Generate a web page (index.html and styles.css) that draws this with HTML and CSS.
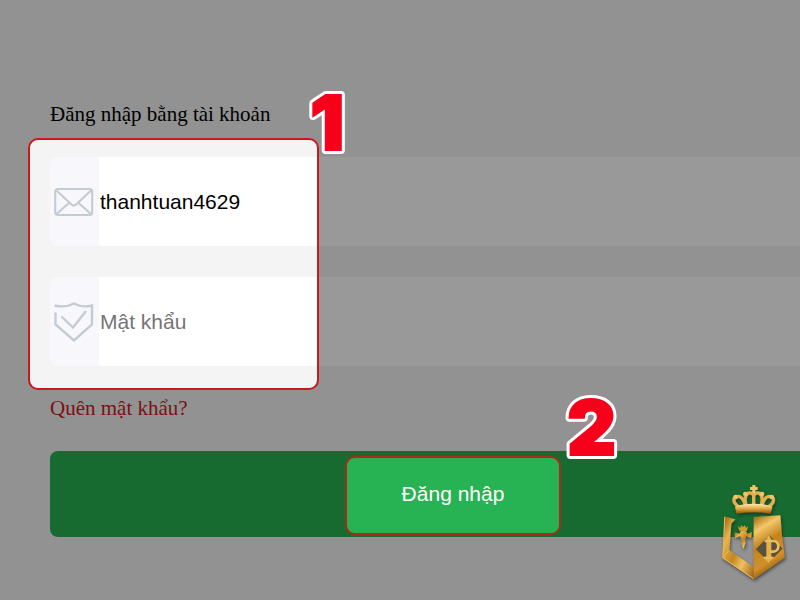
FILE: index.html
```
<!DOCTYPE html>
<html lang="vi">
<head>
  <meta charset="UTF-8">
  <meta name="viewport" content="width=device-width, initial-scale=1.0">
  <title>Đăng nhập</title>
  <link rel="stylesheet" href="styles.css">
</head>
<body>
  <form class="login">
    <h1 class="login-title">Đăng nhập bằng tài khoản</h1>

    <div class="field">
      <label class="field-icon" for="username" aria-label="Tài khoản">
        <svg width="40" height="30" viewBox="0 0 40 30" fill="none" stroke="#c3ccd3" stroke-width="2.200">
          <rect x="1.200" y="2" width="37" height="26" rx="2.500"/>
          <path d="M2.500 3.500L17.500 17.500q2.300 2 4.600 0L37 3.500M2.500 27l12.500-11M37 27L24.500 16"/>
        </svg>
      </label>
      <input class="field-input" id="username" type="text" value="thanhtuan4629">
    </div>

    <div class="field">
      <label class="field-icon" for="password" aria-label="Mật khẩu">
        <svg width="40" height="40" viewBox="0 0 40 40" fill="none" stroke="#c3ccd3" stroke-width="2.400">
          <path d="M.5 3.500q11 2.500 19.500-2 8 4.500 18 2V22.500L20 38.500 1.500 22.500V10.500"/>
          <path d="M7.500 14.500L19 25.500 32 9"/>
        </svg>
      </label>
      <input class="field-input" id="password" type="password" placeholder="Mật khẩu">
    </div>

    <a class="forgot" href="#">Quên mật khẩu?</a>
    <button class="submit" type="submit">Đăng nhập</button>
  </form>

  <!-- Dimmed layer with two highlighted steps -->
  <svg class="guide" width="100%" height="100%">
    <defs>
      <mask id="holes">
        <rect width="100%" height="100%" fill="#fff"/>
        <rect x="29" y="139" width="289" height="250" rx="9" fill="#000"/>
        <rect x="346" y="457" width="214" height="77" rx="9" fill="#000"/>
      </mask>
    </defs>
    <rect width="100%" height="100%" fill="#000" fill-opacity="0.4" mask="url(#holes)"/>
    <rect class="frame" x="29" y="139" width="289" height="250" rx="9"/>
    <rect class="frame frame-dark" x="346" y="457" width="214" height="77" rx="9"/>
    <text class="step step-outline" x="310" y="150">1</text>
    <text class="step" x="310" y="150">1</text>
    <text class="step step-outline" x="567" y="455">2</text>
    <text class="step" x="567" y="455">2</text>
  </svg>

  <!-- Gold crest -->
  <svg class="crest" width="90" height="115" viewBox="0 0 270 345">
    <defs>
      <linearGradient id="gold" x1="0" y1="0" x2="1" y2="1">
        <stop offset="0" stop-color="#8d5609"/>
        <stop offset="0.250" stop-color="#e8b44b"/>
        <stop offset="0.500" stop-color="#c38620"/>
        <stop offset="0.700" stop-color="#f0c060"/>
        <stop offset="1" stop-color="#965c0b"/>
      </linearGradient>
      <linearGradient id="gold-right" x1="0" y1="0" x2="0.300" y2="1">
        <stop offset="0" stop-color="#9a5f0c"/>
        <stop offset="0.250" stop-color="#f3c76a"/>
        <stop offset="0.500" stop-color="#c3821c"/>
        <stop offset="0.800" stop-color="#d0912b"/>
        <stop offset="1" stop-color="#8d5609"/>
      </linearGradient>
      <linearGradient id="gold-base" x1="0" y1="0" x2="0" y2="1">
        <stop offset="0" stop-color="#fff0b4"/>
        <stop offset="0.500" stop-color="#e0a840"/>
        <stop offset="1" stop-color="#8d5609"/>
      </linearGradient>
      <filter id="crest-shadow" x="-20%" y="-20%" width="140%" height="140%">
        <feDropShadow dx="3" dy="6" stdDeviation="4" flood-color="#222" flood-opacity="0.6"/>
      </filter>
    </defs>
    <g filter="url(#crest-shadow)">
      <!-- crown -->
      <g fill="none" stroke="#e3b04e" stroke-width="10">
        <path d="M89 97C66 84 67 64 84 64q16 0 24 33M173 97c23-13 22-33 5-33q-16 0-24 33"/>
        <path d="M109 96C96 44 128 50 131 62 134 50 166 44 153 96"/>
        <path d="M131 50v46"/>
      </g>
      <path d="M80 92q51-12 102 0l5 4-5 20q-51-8-102 0l-5-20z" fill="url(#gold-base)"/>
      <g fill="#f0c468">
        <path d="M127 30h9v6h7v9h-7v9h-9v-9h-7v-9h7z"/>
        <circle cx="106" cy="57" r="7"/>
        <circle cx="156" cy="57" r="7"/>
        <circle cx="77" cy="66" r="7"/>
        <circle cx="185" cy="66" r="7"/>
      </g>
      <!-- shield -->
      <path d="M42 124l34 9-12 13-6 80 73 50v36L37 249l5-60z" fill="url(#gold)"/>
      <path d="M44 126l-5 121 18-21M38 248l93 63" fill="none" stroke="#e8b85a" stroke-width="3"/>
      <path d="M131 126l80-5 5 60 8 67-93 64z" fill="url(#gold-right)"/>
      <path d="M178 181l39 39-39 41-40-38z" fill="#575140"/>
      <path d="M138 223l40 38 39-41" fill="none" stroke="#8d5609" stroke-width="3"/>
      <path d="M176 180l8 12v56l5 4-13 11-12-11 5-4v-56z" fill="#e7b04a"/>
      <path d="M164 198h26c20 0 20 32 0 32h-8" fill="none" stroke="#edbd62" stroke-width="8"/>
      <path d="M161 248h30" fill="none" stroke="#edbd62" stroke-width="6"/>
      <!-- small crowned emblem -->
      <path d="M84 153l7 6 3-9 5 7 5-7 4 9 6-6-3 14H88z" fill="#d99a2d"/>
      <path d="M73 172l16 4 4-9h14l5 9 14-5-3 17-15-4-3 9 1 12-6 17-6-17 1-12-4-9-16 4z" fill="url(#gold)"/>
    </g>
  </svg>
</body>
</html>
```
FILE: styles.css
```
* {
  box-sizing: border-box;
}
body {
  margin: 0;
  background-color: #f4f4f4;
  color: #000;
  font-family: "Liberation Sans", Arial, sans-serif;
}

/* Login form */
.login {
  display: flex;
  flex-direction: column;
  padding: 102px 0 0 50px;
}
.login-title {
  margin: 0 0 31px;
  font-family: "Liberation Serif", "Times New Roman", serif;
  font-size: 21px;
  font-weight: normal;
  line-height: 24px;
}
.field {
  display: flex;
  height: 89px;
  margin-bottom: 31px;
  border-radius: 8px 0 0 8px;
  background-color: #fff;
  overflow: hidden;
}
.field-icon {
  display: flex;
  align-items: center;
  padding-left: 4px;
  width: 49px;
  background-color: #f8f8fc;
}
.field-input {
  flex: 1;
  min-width: 0;
  padding: 0 1px;
  border: 0;
  outline: 0;
  background: none;
  color: #000;
  font-family: inherit;
  font-size: 21px;
}
.field-input::placeholder {
  color: #757575;
}
.forgot {
  align-self: flex-start;
  margin-bottom: 31px;
  color: #d41a22;
  font-family: "Liberation Serif", "Times New Roman", serif;
  font-size: 21px;
  line-height: 23px;
  text-decoration: none;
}
.submit {
  height: 86px;
  padding: 0 0 0 56px;
  border: 0;
  border-radius: 8px 0 0 8px;
  background-color: #27b353;
  color: #fff;
  font-family: inherit;
  font-size: 21px;
  cursor: pointer;
}

/* Guide layer */
.guide {
  position: fixed;
  inset: 0;
  pointer-events: none;
}
.frame {
  fill: none;
  stroke: #cb181b;
  stroke-width: 2px;
}
.frame-dark {
  stroke: #a92b18;
}
.step {
  fill: #f70019;
  stroke: #f70019;
  stroke-width: 2px;
  font-family: Inter, "Liberation Sans", sans-serif;
  font-size: 76px;
  font-weight: 900;
}
.step-outline {
  stroke: #fff;
  stroke-width: 8px;
  stroke-linejoin: round;
}
.crest {
  position: fixed;
  right: 0;
  bottom: 10px;
  pointer-events: none;
}
```
